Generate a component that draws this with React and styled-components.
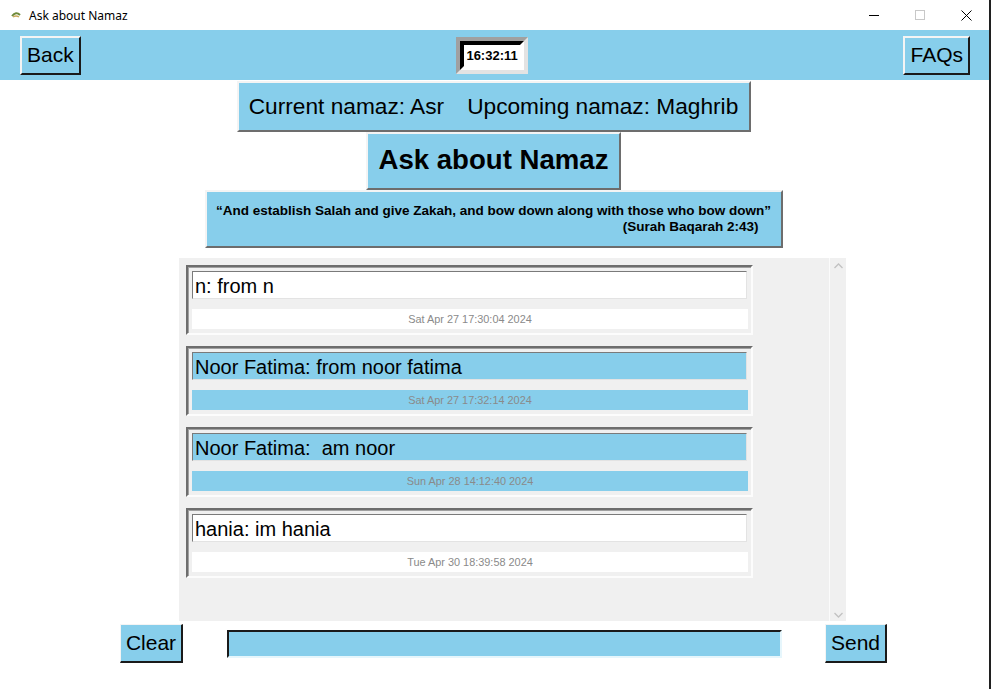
import React from "react";
import styled, { createGlobalStyle, css } from "styled-components";

const SKY = "#87ceeb";

const GlobalStyle = createGlobalStyle`
  html, body {
    margin: 0;
    padding: 0;
    background: #ffffff;
  }
  * { box-sizing: border-box; }
`;

const raised = css`
  border: 2px solid;
  border-color: #f4f4f4 #1a1a1a #1a1a1a #f4f4f4;
`;

// 창 전체
const Window = styled.div`
  width: 991px;
  height: 689px;
  display: flex;
  flex-direction: column;
  border-right: 2px solid #202020;
  font-family: "Liberation Sans", Arial, sans-serif;
  color: #000;
  overflow: hidden;
`;

// 타이틀 바
const TitleBar = styled.div`
  height: 30px;
  display: flex;
  align-items: center;
  padding-left: 10px;
  font-family: "Noto Sans", "Liberation Sans", sans-serif;
  font-size: 12px;
  background: #fff;
`;

const TitleText = styled.span`
  margin-left: 7px;
  flex: 1;
`;

const WinControl = styled.div`
  width: 46px;
  height: 30px;
  display: flex;
  align-items: center;
  justify-content: center;
  color: ${(p) => (p.$dim ? "#c8c8c8" : "#000")};
`;

// 헤더
const Header = styled.div`
  height: 50px;
  background: ${SKY};
  display: grid;
  grid-template-columns: auto 1fr auto;
  align-items: center;
  padding: 0 19px 0 20px;
`;

const HeadButton = styled.button`
  ${raised};
  background: ${SKY};
  height: 39px;
  padding: 0 5px;
  font-family: "Liberation Sans", Arial, sans-serif;
  font-size: 21px;
  color: #000;
  cursor: pointer;
`;

const ClockOuter = styled.div`
  justify-self: center;
  border: 4px solid;
  border-color: #a0a0a0 #e3e3e3 #e3e3e3 #a0a0a0;
`;

const ClockInner = styled.div`
  border: 4px solid;
  border-color: #000 #fff #fff #000;
  background: #fff;
  width: 64px;
  height: 29px;
  display: flex;
  align-items: center;
  justify-content: center;
  font-weight: 700;
  font-size: 13px;
`;

// 상단 정보 영역
const InfoStack = styled.div`
  display: flex;
  flex-direction: column;
  align-items: center;
  padding-top: 1px;
  padding-right: 2px;
`;

const SkyLabel = styled.div`
  border: 2px solid;
  border-color: #f4f4f4 #6d6d6d #6d6d6d #f4f4f4;
  background: ${SKY};
  display: flex;
  align-items: center;
  justify-content: center;
`;

const NamazLabel = styled(SkyLabel)`
  width: 514px;
  height: 51px;
  font-size: 22.7px;
  gap: 23px;
`;

const TitleLabel = styled(SkyLabel)`
  width: 255px;
  height: 58px;
  font-size: 27.6px;
  font-weight: 700;
  padding-bottom: 2px;
`;

const QuoteLabel = styled(SkyLabel)`
  width: 578px;
  height: 58px;
  flex-direction: column;
  align-items: stretch;
  font-size: 13.5px;
  font-weight: 700;
  line-height: 16px;
  padding: 0 8px;
`;

const QuoteLine = styled.div`
  text-align: ${(p) => (p.$right ? "right" : "center")};
  white-space: nowrap;
  padding-right: ${(p) => (p.$right ? "14px" : "0")};
`;

// 채팅 영역
const ChatArea = styled.div`
  margin: 10px 0 0 179px;
  width: 667px;
  height: 363px;
  background: #f0f0f0;
  display: flex;
`;

const MessageList = styled.div`
  flex: 1;
  padding: 7px 0 0 7px;
  display: flex;
  flex-direction: column;
  gap: 11px;
`;

const Scrollbar = styled.div`
  width: 17px;
  border-left: 1px solid #fbfbfb;
  display: flex;
  flex-direction: column;
  justify-content: space-between;
  align-items: center;
  padding: 5px 0 3px;
  color: #c2c2c2;
`;

const MessageCard = styled.div`
  width: 567px;
  height: 70px;
  border: 2px solid;
  border-color: #6d6d6d #fcfcfc #fcfcfc #6d6d6d;
  box-shadow: inset 1px 1px 0 #a0a0a0;
  padding: 4px;
  display: flex;
  flex-direction: column;
  gap: 10px;
`;

const MessageEntry = styled.div`
  height: 28px;
  width: 555px;
  border: 1px solid;
  border-color: #7a7a7a #e3e3e3 #e3e3e3 #7a7a7a;
  background: ${(p) => (p.$sky ? SKY : "#fff")};
  font-size: 20px;
  line-height: 28px;
  padding-left: 2px;
  white-space: pre;
`;

const DateLabel = styled.div`
  height: 20px;
  width: 556px;
  background: ${(p) => (p.$sky ? SKY : "#fff")};
  color: #8a8a8a;
  font-size: 10.9px;
  display: flex;
  align-items: center;
  justify-content: center;
`;

// 하단 입력 영역
const BottomRow = styled.div`
  display: flex;
  align-items: center;
  margin-top: 3px;
  padding-left: 120px;
  height: 39px;
`;

const BottomButton = styled.button`
  border: 1px solid;
  border-color: #f4f4f4 #1a1a1a #1a1a1a #f4f4f4;
  border-width: 1px 2px 2px 1px;
  background: ${SKY};
  height: 39px;
  width: ${(p) => p.$w}px;
  font-family: "Liberation Sans", Arial, sans-serif;
  font-size: 21px;
  color: #000;
  padding: 0;
`;

const MessageInput = styled.div`
  margin: 0 43px 0 44px;
  width: 555px;
  height: 28px;
  background: ${SKY};
  border: 2px solid;
  border-color: #1a1a1a #e6f6fc #e6f6fc #1a1a1a;
`;

const Chevron = ({ up }) => (
  <svg width="9" height="6" viewBox="0 0 9 6">
    <polyline
      points={up ? "0.5,5 4.5,1 8.5,5" : "0.5,1 4.5,5 8.5,1"}
      fill="none"
      stroke="currentColor"
      strokeWidth="1.3"
    />
  </svg>
);

const messages = [
  { text: "n: from n", date: "Sat Apr 27 17:30:04 2024", sky: false },
  { text: "Noor Fatima: from noor fatima", date: "Sat Apr 27 17:32:14 2024", sky: true },
  { text: "Noor Fatima:  am noor", date: "Sun Apr 28 14:12:40 2024", sky: true },
  { text: "hania: im hania", date: "Tue Apr 30 18:39:58 2024", sky: false },
];

export default function App() {
  return (
    <Window>
      <GlobalStyle />
      <TitleBar>
        <svg width="12" height="12" viewBox="0 0 12 12">
          <path d="M2 7 Q6 2 10 6" fill="none" stroke="#6d8a3a" strokeWidth="2" />
          <path d="M3 8 Q6 6 9 8" fill="none" stroke="#c9a85a" strokeWidth="1.5" />
        </svg>
        <TitleText>Ask about Namaz</TitleText>
        <WinControl>
          <svg width="10" height="10" viewBox="0 0 10 10">
            <line x1="0" y1="5.5" x2="10" y2="5.5" stroke="#000" strokeWidth="1" />
          </svg>
        </WinControl>
        <WinControl $dim>
          <svg width="10" height="10" viewBox="0 0 10 10">
            <rect x="0.5" y="0.5" width="9" height="9" fill="none" stroke="currentColor" />
          </svg>
        </WinControl>
        <WinControl>
          <svg width="11" height="11" viewBox="0 0 11 11">
            <path d="M0.5 0.5 L10.5 10.5 M10.5 0.5 L0.5 10.5" stroke="#000" strokeWidth="1" />
          </svg>
        </WinControl>
      </TitleBar>

      <Header>
        <HeadButton>Back</HeadButton>
        <ClockOuter>
          <ClockInner>16:32:11</ClockInner>
        </ClockOuter>
        <HeadButton>FAQs</HeadButton>
      </Header>

      <InfoStack>
        <NamazLabel>
          <span>Current namaz: Asr</span>
          <span>Upcoming namaz: Maghrib</span>
        </NamazLabel>
        <TitleLabel>Ask about Namaz</TitleLabel>
        <QuoteLabel>
          <QuoteLine>“And establish Salah and give Zakah, and bow down along with those who bow down”</QuoteLine>
          <QuoteLine $right>(Surah Baqarah 2:43)</QuoteLine>
        </QuoteLabel>
      </InfoStack>

      <ChatArea>
        <MessageList>
          {messages.map((m) => (
            <MessageCard key={m.date}>
              <MessageEntry $sky={m.sky}>{m.text}</MessageEntry>
              <DateLabel $sky={m.sky}>{m.date}</DateLabel>
            </MessageCard>
          ))}
        </MessageList>
        <Scrollbar>
          <Chevron up />
          <Chevron />
        </Scrollbar>
      </ChatArea>

      <BottomRow>
        <BottomButton $w={63}>Clear</BottomButton>
        <MessageInput />
        <BottomButton $w={62}>Send</BottomButton>
      </BottomRow>
    </Window>
  );
}
